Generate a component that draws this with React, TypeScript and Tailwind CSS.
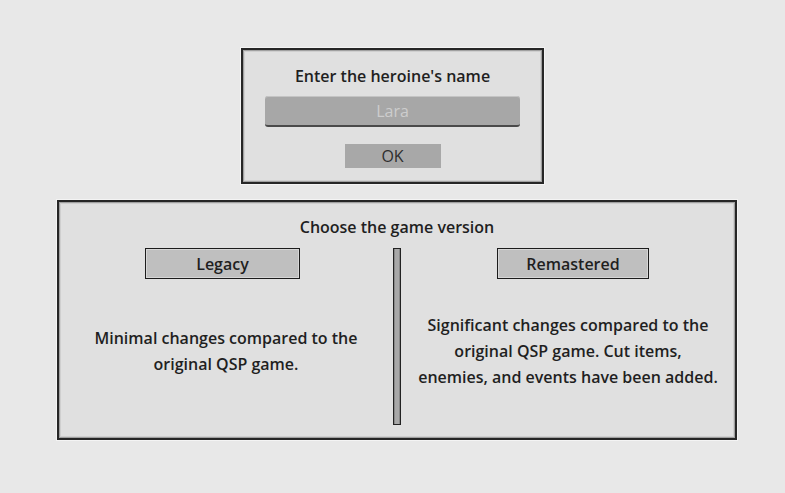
import React from "react";

export default function App() {
  const font = { fontFamily: '"Open Sans", "Noto Sans", sans-serif' };
  return (
    <div
      className="w-[785px] h-[493px] bg-[#e8e8e8] flex flex-col pt-[48px] text-[#1f1f1f]"
      style={font}
    >
      {/* Name dialog */}
      <div className="mx-auto w-[303px] h-[136px] bg-[#e0e0e0] border-2 border-[#262626] shadow-[0_0_0_1px_#f4f4f4,inset_0_0_0_1px_#a0a0a0,inset_0_0_0_2px_#cfcfcf] flex flex-col items-center pt-[15px]">
        <div className="text-[16px] leading-[22px] font-semibold">Enter the heroine's name</div>
        <div className="mt-[9px] w-[255px] h-[31px] rounded-[3px] bg-[#a7a7a7] border-b-2 border-[#4a4a4a] shadow-[inset_0_1px_0_#c4c4c4] flex items-center justify-center text-[16px] text-[#cdcdcd]">
          Lara
        </div>
        <div className="mt-[17px] w-[96px] h-[24px] bg-[#a8a8a8] flex items-center justify-center text-[16px] text-[#2e2e2e]">
          OK
        </div>
      </div>

      {/* Version dialog */}
      <div className="mt-[16px] ml-[57px] w-[680px] h-[240px] bg-[#e0e0e0] border-2 border-[#262626] shadow-[0_0_0_1px_#f4f4f4,inset_0_0_0_1px_#a0a0a0,inset_0_0_0_2px_#cfcfcf] flex flex-col pt-[14px] pb-[13px]">
        <div className="text-center text-[16px] leading-[22px] font-semibold">Choose the game version</div>
        <div className="mt-[10px] flex flex-1">
          <div className="flex-1 flex flex-col items-center">
            <div className="mr-[7px] w-[155px] h-[31px] bg-[#bfbfbf] border-[1.5px] border-[#1c1c1c] shadow-[inset_0_0_0_1px_#d6d6d6] flex items-center justify-center text-[16px] font-semibold">
              Legacy
            </div>
            <div className="flex-1 flex items-center justify-center text-center text-[16px] leading-[26px] font-semibold pb-[2px]">
              <p>
                Minimal changes compared to the
                <br />
                original QSP game.
              </p>
            </div>
          </div>
          <div className="w-[8px] bg-[#a8a8a8] border-[1.5px] border-[#222] shadow-[inset_1px_0_0_#888,inset_-1px_0_0_#888]" />
          <div className="flex-1 flex flex-col items-center">
            <div className="ml-[10px] w-[152px] h-[31px] bg-[#bfbfbf] border-[1.5px] border-[#1c1c1c] shadow-[inset_0_0_0_1px_#d6d6d6] flex items-center justify-center text-[16px] font-semibold">
              Remastered
            </div>
            <div className="flex-1 flex items-center justify-center text-center text-[16px] leading-[26px] font-semibold pb-[2px]">
              <p>
                Significant changes compared to the
                <br />
                original QSP game. Cut items,
                <br />
                enemies, and events have been added.
              </p>
            </div>
          </div>
        </div>
      </div>
    </div>
  );
}
